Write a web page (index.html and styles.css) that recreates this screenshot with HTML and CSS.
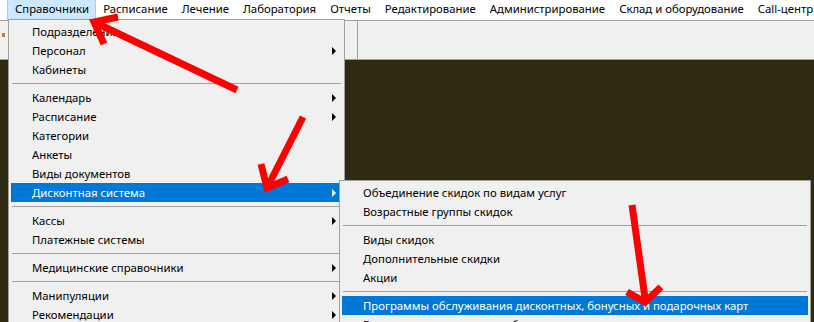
FILE: index.html
```html
<!DOCTYPE html>
<html lang="ru">
  <head>
    <meta charset="UTF-8" />
    <title>Справочники</title>
    <link rel="stylesheet" href="styles.css">
  </head>
  <body>
    <div class="menubar">
      <span class="menubar-item active">Справочники</span>
      <span class="menubar-item">Расписание</span>
      <span class="menubar-item">Лечение</span>
      <span class="menubar-item">Лаборатория</span>
      <span class="menubar-item">Отчеты</span>
      <span class="menubar-item">Редактирование</span>
      <span class="menubar-item">Администрирование</span>
      <span class="menubar-item">Склад и оборудование</span>
      <span class="menubar-item">Call-центр</span>
    </div>
    <div class="toolbar">
      <div class="toolbar-panel">
        <span class="toolbar-icon"></span>
      </div>
    </div>
    <div class="workspace"></div>

    <!-- выпадающее меню -->
    <div class="menu dropdown">
      <div class="menu-item">Подразделения</div>
      <div class="menu-item sub">Персонал</div>
      <div class="menu-item">Кабинеты</div>
      <div class="menu-sep"></div>
      <div class="menu-item sub">Календарь</div>
      <div class="menu-item sub">Расписание</div>
      <div class="menu-item">Категории</div>
      <div class="menu-item">Анкеты</div>
      <div class="menu-item">Виды документов</div>
      <div class="menu-item sub selected">Дисконтная система</div>
      <div class="menu-sep"></div>
      <div class="menu-item sub">Кассы</div>
      <div class="menu-item">Платежные системы</div>
      <div class="menu-sep"></div>
      <div class="menu-item sub">Медицинские справочники</div>
      <div class="menu-sep"></div>
      <div class="menu-item sub">Манипуляции</div>
      <div class="menu-item sub">Рекомендации</div>
    </div>

    <div class="menu submenu">
      <div class="menu-item">Объединение скидок по видам услуг</div>
      <div class="menu-item">Возрастные группы скидок</div>
      <div class="menu-sep"></div>
      <div class="menu-item">Виды скидок</div>
      <div class="menu-item">Дополнительные скидки</div>
      <div class="menu-item">Акции</div>
      <div class="menu-sep"></div>
      <div class="menu-item selected">Программы обслуживания дисконтных, бонусных и подарочных карт</div>
      <div class="menu-item">Выпуск карт и начисление бонусов</div>
    </div>

    <!-- красные стрелки -->
    <svg class="arrows" width="814" height="322" viewBox="0 0 814 322">
      <g fill="none" stroke="#ff0000" stroke-width="7">
        <line x1="237" y1="90" x2="96" y2="23" />
        <polyline points="118,17 94,22 104,44" />
        <line x1="303" y1="117" x2="268" y2="186" />
        <polyline points="261,164 267,188 288,179" />
        <line x1="632" y1="205" x2="645" y2="298" />
        <polyline points="627,292 645,302 661,287" />
      </g>
    </svg>
  </body>
</html>
```

FILE: styles.css
```css
* {
  margin: 0;
  padding: 0;
  box-sizing: border-box;
}

body {
  width: 814px;
  height: 322px;
  overflow: hidden;
  position: relative;
  font-family: "Noto Sans", "Open Sans", sans-serif;
  font-size: 11.35px;
  color: #000000;
  background: #2e2b11;
}

.menubar {
  height: 20px;
  background: #ffffff;
  display: flex;
  align-items: stretch;
  padding-left: 7px;
}

.menubar-item {
  padding: 0 6px;
  line-height: 18px;
  border: 1px solid transparent;
  border-top: none;
  white-space: nowrap;
}

.menubar-item.active {
  padding: 0 6px 0 7px;
  background: #cce8ff;
  border-color: #99d1ff;
}

.toolbar {
  height: 40px;
  background: #f0f0f0;
  border-top: 1px solid #a0a0a0;
  border-bottom: 1px solid #a0a0a0;
}

.toolbar-panel {
  width: 358px;
  height: 100%;
  border-right: 1px solid #a0a0a0;
  position: relative;
}

.toolbar-icon {
  position: absolute;
  left: 2px;
  top: 12px;
  width: 3px;
  height: 4px;
  background: #c87a28;
}

/* Меню */
.menu {
  position: absolute;
  overflow: hidden;
  background: #f0f0f0;
  border: 1px solid #a0a0a0;
  border-bottom: none;
  padding: 2px 2px 0;
}

.dropdown {
  left: 8px;
  top: 19px;
  width: 337px;
  height: 303px;
}

.submenu {
  left: 339px;
  top: 180px;
  width: 472px;
  height: 142px;
}

.menu-item {
  position: relative;
  height: 19px;
  line-height: 19px;
  padding-left: 21px;
  white-space: nowrap;
}

.menu-item.selected {
  background: #0078d7;
  color: #ffffff;
}

.menu-item.sub::after {
  content: "";
  position: absolute;
  right: 6px;
  top: 6px;
  border-top: 4px solid transparent;
  border-bottom: 4px solid transparent;
  border-left: 4px solid #000000;
}

.menu-item.selected.sub::after {
  border-left-color: #ffffff;
}

.menu-sep {
  height: 9px;
  padding-top: 4px;
  margin: 0 1px;
}

.menu-sep::before {
  content: "";
  display: block;
  height: 1px;
  background: #a0a0a0;
}

.arrows {
  position: absolute;
  left: 0;
  top: 0;
  pointer-events: none;
}
```
